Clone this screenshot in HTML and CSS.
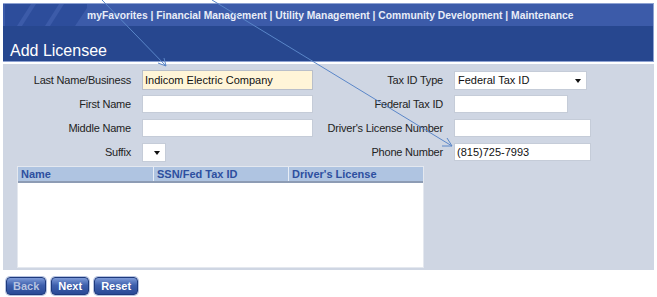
FILE: index.html
```html
<!DOCTYPE html>
<html lang="en">

<head>
    <meta charset="UTF-8">
    <title>Add Licensee</title>
    <link rel="stylesheet" href="styles.css">
</head>

<body>

    <div id="page">
        <div id="header">
            <div class="topbar">
                <svg class="stripes" width="82" height="22" viewBox="0 0 82 22">
                    <polygon points="0,0 26,0 12,22 0,22" fill="#2d4d9b" />
                    <polygon points="31,0 54,0 40,22 17,22" fill="#2d4d9b" />
                    <polygon points="59,0 82,0 82,4 70,22 45,22" fill="#2d4d9b" />
                </svg>
                <div class="nav">
                    <a href="#">myFavorites</a> | <a href="#">Financial Management</a> | <a href="#">Utility Management</a> | <a href="#">Community Development</a> | <a href="#">Maintenance</a>
                </div>
            </div>
            <div class="titlebar">Add Licensee</div>
        </div>

        <div id="panel">
            <div class="form">
                <label>Last Name/Business</label>
                <div><input class="wide current" type="text" value="Indicom Electric Company"></div>
                <label>Tax ID Type</label>
                <div><div class="select tax-type">Federal Tax ID<span class="caret"></span></div></div>

                <label>First Name</label>
                <div><input class="wide" type="text"></div>
                <label>Federal Tax ID</label>
                <div><input class="medium" type="text"></div>

                <label>Middle Name</label>
                <div><input class="wide" type="text"></div>
                <label>Driver's License Number</label>
                <div><input class="long" type="text"></div>

                <label>Suffix</label>
                <div><div class="select suffix"><span class="caret"></span></div></div>
                <label>Phone Number</label>
                <div><input class="long" type="text" value="(815)725-7993"></div>
            </div>

            <div class="grid">
                <div class="grid-head">
                    <div class="col name">Name</div>
                    <div class="col tax">SSN/Fed Tax ID</div>
                    <div class="col lic">Driver's License</div>
                </div>
                <div class="grid-body"></div>
            </div>
        </div>

        <div class="actions">
            <button class="btn" disabled>Back</button>
            <button class="btn">Next</button>
            <button class="btn">Reset</button>
        </div>
    </div>

    <!-- annotation arrows drawn over the page -->
    <svg class="arrows" width="657" height="297" viewBox="0 0 657 297">
        <line x1="102" y1="0" x2="166" y2="66" stroke="#5a86c8" stroke-width="1" />
        <polyline points="158,63 166,66 164,58" fill="none" stroke="#5a86c8" stroke-width="1" />
        <line x1="212" y1="0" x2="452" y2="146" stroke="#5a86c8" stroke-width="1" />
        <polyline points="442,146 452,146 447,138" fill="none" stroke="#5a86c8" stroke-width="1" />
    </svg>

</body>

</html>
```

FILE: styles.css
```css
/* Reset */
* {
    box-sizing: border-box;
    margin: 0;
    padding: 0;
}

body {
    width: 657px;
    height: 297px;
    background-color: #fff;
    font-family: 'Liberation Sans', Arial, sans-serif;
    font-size: 11px;
    color: #222;
    position: relative;
    overflow: hidden;
}

#page {
    padding: 3px 3px 0 3px;
}

/* Header */
#header {
    border-top: 1px solid #8ea2d2;
    border-right: 1px solid #8ea2d2;
}

.topbar {
    display: flex;
    align-items: center;
    height: 22px;
    background-color: #3c5ba9;
}

.stripes {
    display: block;
    margin-left: 2px;
    flex: none;
}

.nav {
    margin-left: 0;
    font-size: 10.3px;
    font-weight: bold;
    color: #e8edf8;
    white-space: nowrap;
}

.nav a {
    color: #e8edf8;
    text-decoration: none;
}

.titlebar {
    height: 36px;
    padding: 16px 0 0 7px;
    background-color: #27478f;
    color: #fff;
    font-size: 16px;
    border-bottom: 1px solid #8ea2d2;
}

/* Gray panel */
#panel {
    margin-top: 2px;
    height: 206px;
    background-color: #cfd6e3;
    padding: 7px 0 0 0;
}

.form {
    display: grid;
    grid-template-columns: 128px 170px 120px auto;
    grid-auto-rows: 18px;
    column-gap: 11px;
    row-gap: 6px;
    align-items: center;
}

.form label {
    text-align: right;
    white-space: nowrap;
    letter-spacing: -0.2px;
}

.form input {
    display: block;
    height: 18px;
    border: 1px solid #c5ccd8;
    background-color: #fff;
    font-family: 'Liberation Sans', Arial, sans-serif;
    font-size: 11px;
    color: #111;
    padding: 0 2px;
}

.form input.wide {
    width: 171px;
}

.form input.current {
    height: 20px;
    background-color: #fff5d8;
    border-color: #b9bfca;
}

.form input.medium {
    width: 114px;
}

.form input.long {
    width: 137px;
}

.select {
    position: relative;
    height: 19px;
    background-color: #fff;
    border: 1px solid #c5ccd8;
    padding: 2px 0 0 3px;
    color: #111;
}

.select.tax-type {
    width: 133px;
}

.select.suffix {
    width: 24px;
}

.caret {
    position: absolute;
    right: 5px;
    top: 7px;
    width: 0;
    height: 0;
    border-left: 3px solid transparent;
    border-right: 3px solid transparent;
    border-top: 4px solid #111;
}

/* Results grid */
.grid {
    margin: 5px 0 0 14px;
    width: 407px;
    height: 102px;
    background-color: #fff;
    border: 1px solid #e4e8ef;
}

.grid-head {
    display: flex;
    height: 16px;
    background-color: #afc4e1;
    border-bottom: 2px solid #8d9cb4;
    color: #2d4f9f;
    font-weight: bold;
    font-size: 11px;
}

.grid-head .col {
    padding: 1px 0 0 3px;
    border-right: 1px solid #e7edf6;
}

.grid-head .name {
    width: 136px;
}

.grid-head .tax {
    width: 135px;
}

.grid-head .lic {
    flex: 1;
    border-right: none;
}

/* Buttons */
.actions {
    display: flex;
    gap: 5px;
    margin: 7px 0 0 3px;
}

.btn {
    height: 18px;
    padding: 0 6px;
    border: 1px solid #1e3a7c;
    border-radius: 4px;
    background: linear-gradient(#7e9bd8, #3e60ad 45%, #2a4a96);
    color: #fff;
    font-family: 'Liberation Sans', Arial, sans-serif;
    font-size: 11px;
    font-weight: bold;
    box-shadow: 0 0 0 1px #b7c4e2;
}

.btn:disabled {
    color: #b7c3e0;
}

/* Annotation overlay */
.arrows {
    position: absolute;
    left: 0;
    top: 0;
    pointer-events: none;
}
```
